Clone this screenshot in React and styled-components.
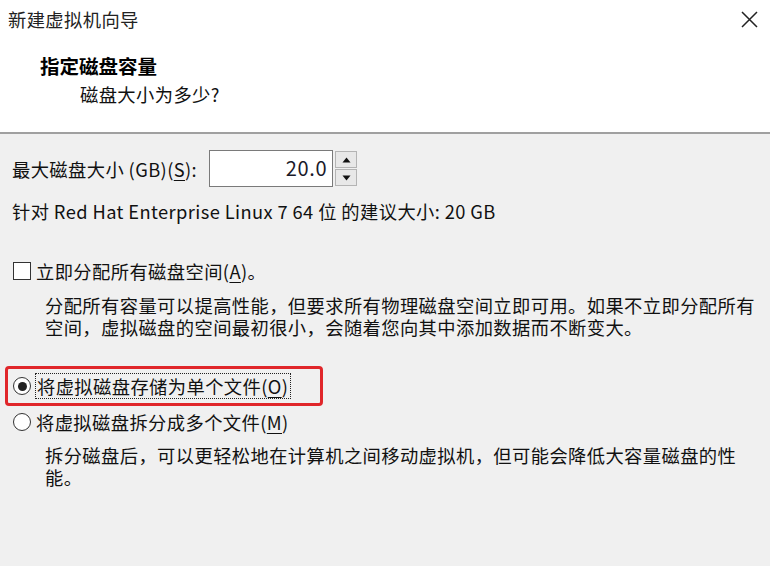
import React from "react";
import styled, { createGlobalStyle } from "styled-components";

const Global = createGlobalStyle`
  html, body { margin: 0; padding: 0; background: #f0f0f0; }
  body { font-family: "Noto Sans CJK SC", "Noto Sans", sans-serif; color: #111; }
`;

const Window = styled.div`
  width: 770px;
  height: 566px;
  display: flex;
  flex-direction: column;
  overflow: hidden;
  background: #f0f0f0;
  font-size: 18.3px;
  letter-spacing: 0.4px;
`;

const Header = styled.div`
  height: 134px;
  flex: none;
  background: #fff;
  display: flex;
  flex-direction: column;
  box-sizing: border-box;
  padding-top: 8px;
  border-bottom: 2px solid #a0a0a0;
`;

const TitleBar = styled.div`
  display: flex;
  justify-content: space-between;
  align-items: center;
  height: 22px;
  padding: 0 12px 0 8px;
  line-height: 22px;
  color: #222;
`;

const Close = styled.svg`
  width: 17px;
  height: 17px;
`;

const Heading = styled.div`
  margin: 24px 0 0 40px;
  font-weight: bold;
  font-size: 19.5px;
  letter-spacing: 0;
  line-height: 24px;
  color: #000;
`;

const Sub = styled.div`
  margin: 4px 0 0 80px;
  line-height: 24px;
`;

const Body = styled.div`
  display: flex;
  flex-direction: column;
  padding: 16px 12px 0 12px;
`;

const SizeRow = styled.div`
  display: flex;
  align-items: center;
  height: 37px;
`;

const Label = styled.span`
  line-height: 22px;
`;

const U = styled.span`
  text-decoration: underline;
  text-underline-offset: 3px;
  text-decoration-thickness: 1px;
`;

const SpinBox = styled.div`
  display: flex;
  height: 37px;
  margin-left: 12px;
`;

const NumField = styled.div`
  width: 124px;
  box-sizing: border-box;
  border: 1px solid #7a7a7a;
  background: #fff;
  text-align: right;
  padding-right: 5px;
  line-height: 33px;
  font-size: 20px;
  letter-spacing: 0.6px;
  color: #1a1a2a;
`;

const Spinner = styled.div`
  width: 22px;
  display: flex;
  flex-direction: column;
  gap: 1px;
  margin-left: 2px;
  padding: 1px 0;
`;

const SpinBtn = styled.div`
  flex: 1;
  border: 1px solid #b4b4b4;
  background: #e8e8e8;
  display: flex;
  align-items: center;
  justify-content: center;
`;

const Tri = styled.svg`
  width: 9px;
  height: 6px;
`;

const Line = styled.div`
  line-height: 22px;
  margin-top: ${(p) => p.$mt || 0}px;
`;

const OptionRow = styled.div`
  display: flex;
  align-items: center;
  height: 24px;
  margin-top: ${(p) => p.$mt || 0}px;
  margin-left: 1px;
`;

const CheckBox = styled.div`
  width: 18px;
  height: 18px;
  box-sizing: border-box;
  border: 1.5px solid #333;
  background: #fff;
  margin-right: 5px;
`;

const Radio = styled.div`
  width: 18px;
  height: 18px;
  box-sizing: border-box;
  border: 1.5px solid #333;
  border-radius: 50%;
  background: #fff;
  margin-right: 5px;
  display: flex;
  align-items: center;
  justify-content: center;
  &::after {
    content: "";
    display: ${(p) => (p.$on ? "block" : "none")};
    width: 9px;
    height: 9px;
    border-radius: 50%;
    background: #222;
  }
`;

const Highlight = styled.div`
  margin: 28px 0 0 -7px;
  width: 318px;
  height: 40px;
  box-sizing: border-box;
  border: 3px solid #e0262a;
  border-radius: 4px;
  padding: 5px 0 0 4px;
`;

const Focus = styled.span`
  outline: 1px dotted #222;
  outline-offset: 0px;
  line-height: 24px;
  padding: 0 2px 0 1px;
`;

const Desc = styled.div`
  padding-left: 33px;
  line-height: 22px;
  margin-top: ${(p) => p.$mt || 0}px;
`;

export default function App() {
  return (
    <>
      <Global />
      <Window>
        <Header>
          <TitleBar>
            <span>新建虚拟机向导</span>
            <Close viewBox="0 0 17 17">
              <path d="M1 1 L16 16 M16 1 L1 16" stroke="#222" strokeWidth="1.5" fill="none" />
            </Close>
          </TitleBar>
          <Heading>指定磁盘容量</Heading>
          <Sub>磁盘大小为多少?</Sub>
        </Header>
        <Body>
          <SizeRow>
            <Label>
              最大磁盘大小 (GB)(<U>S</U>):
            </Label>
            <SpinBox>
              <NumField>20.0</NumField>
              <Spinner>
                <SpinBtn>
                  <Tri viewBox="0 0 9 6"><path d="M0.5 5.5 L4.5 0.5 L8.5 5.5 Z" fill="#111" /></Tri>
                </SpinBtn>
                <SpinBtn>
                  <Tri viewBox="0 0 9 6"><path d="M0.5 0.5 L4.5 5.5 L8.5 0.5 Z" fill="#111" /></Tri>
                </SpinBtn>
              </Spinner>
            </SpinBox>
          </SizeRow>
          <Line $mt={13}>针对 Red Hat Enterprise Linux 7 64 位 的建议大小: 20 GB</Line>
          <OptionRow $mt={37}>
            <CheckBox />
            <span>
              立即分配所有磁盘空间(<U>A</U>)。
            </span>
          </OptionRow>
          <Desc $mt={11}>
            分配所有容量可以提高性能，但要求所有物理磁盘空间立即可用。如果不立即分配所有
            <br />
            空间，虚拟磁盘的空间最初很小，会随着您向其中添加数据而不断变大。
          </Desc>
          <Highlight>
            <OptionRow>
              <Radio $on />
              <Focus>
                将虚拟磁盘存储为单个文件(<U>O</U>)
              </Focus>
            </OptionRow>
          </Highlight>
          <OptionRow $mt={4}>
            <Radio />
            <span>
              将虚拟磁盘拆分成多个文件(<U>M</U>)
            </span>
          </OptionRow>
          <Desc $mt={10}>
            拆分磁盘后，可以更轻松地在计算机之间移动虚拟机，但可能会降低大容量磁盘的性
            <br />
            能。
          </Desc>
        </Body>
      </Window>
    </>
  );
}
